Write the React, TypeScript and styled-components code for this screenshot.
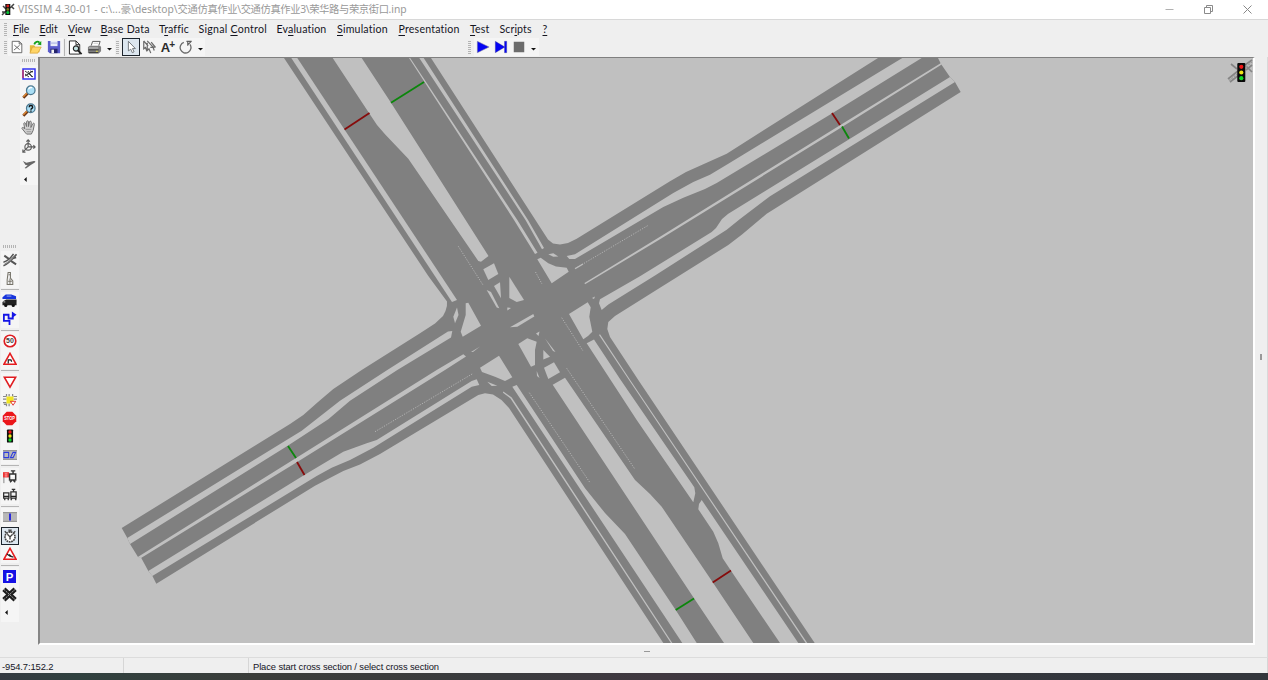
import React from "react";
import styled, { createGlobalStyle } from "styled-components";

const Global = createGlobalStyle`
  * { box-sizing: border-box; }
  body { margin: 0; overflow: hidden; background: #f0f0f0; }
`;

const UI = `"Lato", "Noto Sans CJK SC", sans-serif`;

const Window = styled.div`
  width: 1268px;
  height: 680px;
  display: flex;
  flex-direction: column;
  background: #efefef;
  color: #15151f;
  font-family: ${UI};
  svg { display: block; flex: none; }
`;

const TitleBar = styled.header`
  height: 20px;
  display: flex;
  align-items: center;
  background: #fff;
  border-bottom: 1px solid #d8d8d8;
  padding-left: 1px;
`;
const Title = styled.div`
  margin-left: 3px;
  font: 10.3px/19px "Noto Sans", "Noto Sans CJK SC", sans-serif;
  color: #999;
  white-space: pre;
  width: 1146px;
`;
const TitlePart = styled.span<{ $spacing: number }>`
  letter-spacing: ${(p) => p.$spacing}px;
`;
const Controls = styled.div`
  display: flex;
  gap: 28px;
`;

const MenuBar = styled.nav`
  height: 18px;
  display: flex;
  align-items: center;
  padding-left: 4px;
`;
const MenuItem = styled.div<{ $w: number; $ls: number }>`
  width: ${(p) => p.$w}px;
  font-size: 10.6px;
  line-height: 18px;
  letter-spacing: ${(p) => p.$ls}px;
  white-space: nowrap;
  flex: none;
  u { text-underline-offset: 1.5px; text-decoration-thickness: 1px; }
`;

const Grip = styled.div<{ $flat?: boolean; $gap?: number }>`
  flex: none;
  width: ${(p) => (p.$flat ? 13 : 3)}px;
  height: ${(p) => (p.$flat ? 3 : 13)}px;
  margin: ${(p) => (p.$flat ? "1px 0 3px" : `0 ${p.$gap ?? 3}px 0 0`)};
  background: ${(p) =>
    `repeating-linear-gradient(${p.$flat ? "90deg" : "180deg"}, #b4b4b4 0 1px, #efefef 1px 2px)`};
`;

const ToolBar = styled.div`
  height: 19px;
  display: flex;
  align-items: center;
  padding: 0 0 1px 4px;
`;
const ToolGroup = styled.div<{ $w: number }>`
  width: ${(p) => p.$w}px;
  height: 18px;
  display: flex;
  align-items: center;
  flex: none;
`;
const ToolButton = styled.div<{ $active?: boolean; $w?: number; $h?: number }>`
  width: ${(p) => p.$w ?? 18.4}px;
  height: ${(p) => p.$h ?? 18.25}px;
  flex: none;
  display: flex;
  align-items: center;
  justify-content: center;
  background: ${(p) => (p.$active ? "#dce6ef" : "#f5f5f5")};
  border: ${(p) => (p.$active ? "1px solid #1c242c" : "0")};
`;
const Divider = styled.div<{ $vertical?: boolean }>`
  flex: none;
  width: ${(p) => (p.$vertical ? 1 : 18)}px;
  height: ${(p) => (p.$vertical ? 17 : 1)}px;
  margin: ${(p) => (p.$vertical ? "0 2px 0 1px" : "1.5px 0")};
  background: #b5b5b5;
`;

const Body = styled.main`
  flex: 1;
  min-height: 0;
  display: flex;
`;
const SideBar = styled.aside<{ $w: number; $top: number }>`
  width: ${(p) => p.$w}px;
  padding: ${(p) => p.$top}px 0 0 0.5px;
  display: flex;
  flex-direction: column;
  align-items: center;
  flex: none;
`;
const Center = styled.section`
  width: 1217px;
  display: flex;
  flex-direction: column;
  align-items: center;
`;
const Viewport = styled.div`
  width: 1217px;
  height: 588px;
  border: 2px solid #fff;
  border-top: 1px solid #808080;
  border-left-color: #858585;
  background: #c0c0c0;
`;
const Handle = styled.div<{ $vertical?: boolean }>`
  width: ${(p) => (p.$vertical ? 2 : 6)}px;
  height: ${(p) => (p.$vertical ? 6 : 1)}px;
  margin: ${(p) => (p.$vertical ? "297px 0 0 5px" : "6px 0 0")};
  background: #999;
`;
const RightEdge = styled.div`
  flex: 1;
  border-right: 1px solid #d9d9d9;
`;

const StatusBar = styled.footer`
  height: 16px;
  display: flex;
  border-top: 1px solid #dcdcdc;
  font: 9.4px/17px "Liberation Sans", sans-serif;
`;
const StatusCell = styled.div<{ $w?: number; $ls?: number }>`
  width: ${(p) => (p.$w ? p.$w + "px" : "auto")};
  flex: ${(p) => (p.$w ? "none" : 1)};
  padding-left: ${(p) => (p.$w ? 2 : 4)}px;
  letter-spacing: ${(p) => p.$ls ?? 0}px;
  border-right: 1px solid #d6d6d6;
  white-space: nowrap;
`;
const Desktop = styled.div`
  height: 7px;
  background: linear-gradient(90deg, #343a41, #30413f 6%, #3b3d3a 20%, #3a3b3e 40%, #403840 52%, #34373d 75%, #33363c);
`;

/* ---------- icons ---------- */

const I: React.FC<{ s?: number; children: React.ReactNode }> = ({ s = 14, children }) => (
  <svg width={s} height={s} viewBox="0 0 16 16" fill="none">{children}</svg>
);

const Signal: React.FC<{ x?: number }> = ({ x = 8 }) => (
  <g>
    <rect x={x - 3.5} y="0.5" width="7" height="15" rx="1" fill="#111" />
    <circle cx={x} cy="3.4" r="1.9" fill="#f01414" />
    <circle cx={x} cy="8" r="1.9" fill="#f2e516" />
    <circle cx={x} cy="12.6" r="1.9" fill="#0cd82a" />
  </g>
);

const AppIcon = () => (
  <svg width="14" height="13" viewBox="0 0 14 13">
    <path d="M1 12 5 8M2 3 5 6M9 5l4-4M10 3l3 3M1 9h3" stroke="#444" strokeWidth="1.5" />
    <rect x="4.3" y="1" width="5" height="11" fill="#111" />
    <circle cx="6.8" cy="3" r="1.4" fill="#d8201c" />
    <circle cx="6.8" cy="6.4" r="1.3" fill="#7b7a20" />
    <circle cx="6.8" cy="9.6" r="1.5" fill="#08c838" />
  </svg>
);
const NewIcon = () => (
  <I s={14}><path d="M2.500 1.500h8l3 3v10h-11z" fill="#fdfdfd" stroke="#5c5c5c" /><path d="M10.500 1.500v3h3M4.500 11.500 11 6M5 6l6 5" stroke="#5c5c5c" /></I>
);
const OpenIcon = () => (
  <I><path d="M1 6h5l1 2h5v6H1z" fill="#e5ba3c" /><path d="m1 15 3-7h10l-4 7z" fill="#ffd567" stroke="#cf9930" strokeWidth=".7" /><path d="M6 5c1-3 4-4 6-2" stroke="#15a01a" strokeWidth="2" /><path d="M9.500 5 14 1v5z" fill="#15a01a" /></I>
);
const SaveIcon = () => (
  <I s={14}><path d="M1 1h14v14H3l-2-2z" fill="#5a5ccc" /><path d="M4 1h8v6H4z" fill="#e8ecf8" /><path d="M4 10h8v5H4z" fill="#24246c" /><path d="M5 11h3v4H5z" fill="#f4f4f4" /><path d="M4 3.500h8" stroke="#9da5dd" /></I>
);
const PreviewIcon = () => (
  <I s={15}><path d="M1.500 1h7l4 4v10h-11z" fill="#fff" stroke="#222" /><path d="M8.500 1v4h4" stroke="#222" /><circle cx="8.500" cy="9" r="2.800" fill="#c5e4e4" stroke="#222" strokeWidth="1.200" /><path d="m10.500 11 4 4" stroke="#222" strokeWidth="2" /></I>
);
const PrintIcon = () => (
  <I s={15}><path d="M4.500 6 6 1.500h8L12.500 6" fill="#fff" stroke="#555" /><path d="M1 7.500 3 6h11l1 1.500V12l-2.500 2.500H2L1 13z" fill="#808080" /><path d="M2 8.500h10M7 3.500h5" stroke="#ccc" /><path d="M1.500 10.500h11M2 13.500h10" stroke="#333" /><path d="M9.500 12h2" stroke="#f0e440" /></I>
);
const PointerIcon = () => (
  <I s={14}><path d="M5 1.500v11l2.700-2 1.800 4 2-1-1.800-3.700h3.300z" fill="#fff" stroke="#666b70" /></I>
);
const MultiPointerIcon = () => (
  <I s={14}><path d="M2 1v9l2-1.500 1.500 4M2 1l5 6M6 3v9l2-2 2 5M6 1l7 7.500h-3.500M10.500 2.500 15 8h-2.500l1.500 4" stroke="#6a6a6a" strokeWidth="1.400" /></I>
);
const LabelWrap = styled.span`
  font: bold 13px/15px "Liberation Sans", sans-serif;
  color: #2c2c2c;
  letter-spacing: -0.8px;
  padding-top: 1px;
  sup { font-size: 10px; line-height: 0; vertical-align: 4px; }
`;
const RotateIcon = () => (
  <I><path d="M5.500 2.800A6.200 6.200 0 1 0 12.500 5" stroke="#6b6b6b" strokeWidth="1.500" /><path d="M8.500 1.500h6M10 1.500v5M10 5.500l4-4" stroke="#5e5e5e" strokeWidth="1.300" /></I>
);
const DropIcon = () => (
  <svg width="5" height="8" viewBox="0 0 5 8"><path d="M0 5h5L2.500 7.500z" fill="#111" /></svg>
);
const LeftIcon = () => (
  <svg width="12" height="5" viewBox="0 0 12 5"><path d="M3.700 0v5L1 2.500z" fill="#111" /></svg>
);
const PlayIcon = () => (
  <I s={14}><path d="M1.500 1.500v13L15 8z" fill="#0404f4" stroke="#889" strokeWidth=".6" /></I>
);
const StepIcon = () => (
  <I s={14}><path d="M1.500 1.500v13L12.500 8zM12 1.500h2.500v13H12z" fill="#0404f4" stroke="#448" strokeWidth=".4" /></I>
);
const StopIcon = () => (
  <I s={12}><path d="M1 1h14v14H1z" fill="#6c6c6c" /></I>
);

const OverviewIcon = () => (
  <svg width="14" height="12" viewBox="0 0 14 12"><path d="M1 1h12v10H1z" fill="#fff" stroke="#3535f0" strokeWidth="1.500" /><path d="M1 2v8" stroke="#e22" /><path d="m3 3 8 6M3 8l8-5M6 3l4 6M3 6l4 3M8 3l3 1" stroke="#222" strokeWidth=".9" /></svg>
);
const Lens = ({ q }: { q?: boolean }) => (
  <I>
    <path d="m1.500 14.500 5-5" stroke="#6a3515" strokeWidth="3.200" />
    <path d="m1.500 13.500 4.500-4.500" stroke="#e08830" strokeWidth="1.600" />
    <circle cx="10" cy="6" r="4.900" fill="#a9def5" stroke="#4c7890" strokeWidth="1.400" />
    {q ? (
      <path d="M8.200 4.800c0-2.500 4-2.500 4 0 0 1.400-2 1.300-2 3m0 .7V10" stroke="#111" strokeWidth="1.600" />
    ) : (
      <path d="M7.500 5c.500-1.800 2-2.500 4-2" stroke="#fff" strokeWidth="1.500" />
    )}
  </I>
);
const HandIcon = () => (
  <I s={15}><path d="M5 14 1 9c0-1.500 1.500-1.500 3 .5L3 4c0-1.500 1.500-1.500 2 0L6 7V2c0-1.500 2-1.500 2 0v5l1-5c.3-1.300 2-1 2 .5L10.500 8 12.500 4c1-1.200 2-.5 1.700.8L13 11l-2 4H6z" fill="#d0d0d0" stroke="#6c6c6c" /><path d="M5 10h6M6 12.500h5" stroke="#999" /></I>
);
const AxesIcon = () => (
  <I s={14}><path d="M7 9V1M5 3l2-2 2 2M7 9h8M13 7l2 2-2 2M7 9l-6 6M1 12v3h3" stroke="#5c5c5c" strokeWidth="1.300" /><circle cx="7" cy="9" r="3.700" stroke="#5c5c5c" strokeWidth="1.300" /></I>
);
const PlaneIcon = () => (
  <I s={14}><path d="m1 4.500 4 2.200 8.500-2.200c2.500-.2 2 1.300.7 2L10 9l-5.500 4L3 12.500 6.500 9.500 4 9z" fill="#686868" /></I>
);

const LinksIcon = () => (
  <I><path d="M.5 14.500C5 13 10 8 15.500 1.500M.5 10.500C5 9.500 9 5.500 12 1" stroke="#555" strokeWidth="1.700" /><path d="m1.500 3 5.500 4M9 9l6 4M11 6l4-1" stroke="#555" strokeWidth="2.200" /><path d="M2 12.500C6 11 10 7 13.500 2.500" stroke="#888" strokeWidth="1.200" /></I>
);
const PavementIcon = () => (
  <I s={15}><path d="M6.500 1.500h2.500v6l2.500 3v4H5.500v-5z" fill="#eee" stroke="#77746a" strokeWidth="1.100" /><path d="M8.500 8v6M6.500 11h4M7 4h2" stroke="#77746a" /></I>
);
const VehiclesIcon = () => (
  <I s={15}><path d="M.5 4.500 4 1.500h6l5 2v3H.5z" fill="#1734dc" /><path d="M5 3.300h5" stroke="#9ae" /><path d="M4.500 7H15.500v6H.5V9.500l2-1.500z" fill="#222" /><circle cx="4" cy="13.300" r="1.700" fill="#111" /><circle cx="12" cy="13.300" r="1.700" fill="#111" /><path d="M1.500 9.500h2" stroke="#ccc" /></I>
);
const RouteIcon = () => (
  <I s={15}><path d="M8 15v-4.500H2V4h5v4h4.500V4" stroke="#1414e6" strokeWidth="1.900" /><path d="M10.500.5 15.500 4l-5 3.500z" fill="#1414e6" /></I>
);
const Speed = () => (
  <I><circle cx="8" cy="8" r="6.600" fill="#fff" stroke="#dd1d22" strokeWidth="1.900" /><text x="8" y="10.800" textAnchor="middle" fontSize="8" fontWeight="bold" fontFamily="Liberation Sans, sans-serif" fill="#444">50</text></I>
);
const WarnIcon = ({ d }: { d: string }) => (
  <I><path d="M8 1.500 15 14H1z" fill="#fff" stroke="#e51d20" strokeWidth="1.800" /><path d={d} stroke="#222" strokeWidth="1.400" /></I>
);
const YieldIcon = () => (
  <I><path d="M1.500 2.500h13L8 14z" fill="#fff" stroke="#e01c20" strokeWidth="1.800" /></I>
);
const ConflictIcon = () => (
  <I><path d="M0 4h4M0 7h4M0 11h4M4 1v3M7 1v3M11 1v3M12 4h4M12 7h4M4 12v3M7 12v3M1 13h3" stroke="#888" strokeWidth="1.400" /><path d="M4 4h8v8H4z" fill="#f1e522" /><path d="M8.500 9.500h6l-3 4.500z" fill="#fff" stroke="#e02020" /></I>
);
const StopSign = () => (
  <I s={15}><path d="M5 .8h6L15.200 5v6L11 15.200H5L.8 11V5z" fill="#eb171b" /><text x="2.300" y="10" fontSize="5.500" fontWeight="bold" fontFamily="Liberation Sans, sans-serif" fill="#fff" textLength="11.400" lengthAdjust="spacingAndGlyphs">STOP</text></I>
);
const DetectorIcon = () => (
  <I><path d="M0 2.500h16v11H0z" fill="#bbb" /><path d="M1 5h5.500v6H1zM8.500 11l3-6h3l-3 6z" stroke="#2c3bdf" strokeWidth="1.200" /><path d="M0 3h16M0 13h16" stroke="#888" /></I>
);
const TramStopIcon = () => (
  <I><path d="M1 3v12" stroke="#777" /><path d="M0 2.500h7v6H0z" fill="#e33" /><path d="M2 4.500h3M2 6.800h3" stroke="#fcc" /><path d="M9 1h5M11.500 1v3M7.500 4.500h7v7h-7zM8 14l2-2M14 14l-2-2" stroke="#333" strokeWidth="1.700" /><path d="M9 6h4v2H9z" fill="#fff" /></I>
);
const TransitIcon = () => (
  <I><path d="M.7 5.500h6v6h-6zM9 4.500h6v7H9zM10 1.500h4M12 2v2M2 12v2M6 12v2M10 12l-1 2M14 12l1 2" stroke="#333" strokeWidth="1.500" /><path d="M1 9.500h6M9 9.500h6" stroke="#222" strokeWidth="1.500" /></I>
);
const DataPointIcon = () => (
  <I><path d="M0 2.500h16v11H0z" fill="#b8b8b8" /><path d="M0 3h16M0 13h16" stroke="#888" /><path d="M8 4v8" stroke="#1919e0" strokeWidth="2" /></I>
);
const WatchIcon = () => (
  <I><circle cx="8" cy="9" r="5.700" fill="#fff" stroke="#444" strokeWidth="1.900" strokeDasharray="2 .7" /><path d="M6 1.300h4M8 2v2M2 2.500l2 2M14 2.500l-2 2M8 9l3-3M8 9 5 6M8 9v3" stroke="#444" strokeWidth="1.600" /></I>
);
const ParkIcon = () => (
  <I s={13}><path d="M0 0h16v16H0z" fill="#1512e5" /><text x="8" y="13" textAnchor="middle" fontSize="14" fontWeight="bold" fontFamily="Liberation Sans, sans-serif" fill="#fff">P</text></I>
);
const NodeIcon = () => (
  <I s={15}><path d="M2 2.500 14 13.500M2 13.500 14 2.500" stroke="#1c1c1c" strokeWidth="5" /><path d="M2 2.500 14 13.500M2 13.500 14 2.500" stroke="#bbb" strokeWidth=".9" strokeDasharray="2 1" /></I>
);

/* ---------- road network ---------- */

const network =
  "284,58 428.300,276 447,301.500 446.900,306 445.500,311 443,316 435,323.500 420,333.300 361.700,370 333.300,389 318,402 303.300,415 290,424 121.700,528 127.300,538 130,544 138,557 141,557.500 148.300,571 152.300,575.700 156.300,583.700 315,485.700 343.300,471 360,464.500 380,454 478.300,395 485,393.300 493,394.500 501.500,400 509,408 663.300,643 814.700,643 638.300,380 610,337 607.300,329 608.300,322 615,316 660,287.800 678,276.500 728.300,245 742,234.500 766.700,213.700 960.700,92 955,82 950,77 941,64 938,58 878,58 726.700,153.700 703.300,164.300 686,172 670,181.300 576.700,238.700 568,243 560,244.500 553,243.500 548,239.500 431,58";

const gaps = [
  "291.300,58 297.300,58 457,300 452,302",
  "332.700,58 361.700,58 391,102.700 488.500,256 481,261.700 478.300,261 408.300,158.700 385,134.300 377,125 369,113",
  "483.300,269.300 494,263.300 498.300,274 488.300,280",
  "494,286 500,282.300 501,298.300",
  "509.300,276.700 524,300 516.700,302 509.300,298",
  "486.700,290 491,292 499.300,308.300 496.700,307.500",
  "507.300,307.500 511,308 507.300,310.500",
  "510,327.300 533.300,314 534.300,316.500 517.300,326.700",
  "409,58 410.200,58 517.300,220 537.500,252.700 535,254 514,220",
  "419.300,58 423.700,58 528,220 544,248 542,249.300 525.500,220",
  "548.300,254.300 553.300,253.300 558.300,256.500 553.300,256.700",
  "537.300,259.300 540.700,257.700 548.300,263.300 556,266.500 566.700,267.700 568.700,271.700 551.700,283.300",
  "566.700,256 575,254.300 673.300,193 693.300,182 710,174.700 728.300,163.700 902.300,58 921.700,58 832.700,113 716.700,183 705,189 683.300,197.700 663.300,207 575,259 569.300,259",
  "941,63 941.700,64.500 842,127 660,239.300 585,284.300 584.500,283 660,236.700 840,125.300",
  "950,77 850,138.700 728.300,213.700 722,219 716,228 711.700,232 640,276.300 600,299.300 599,303.300 601.700,310 608.300,304.500 655,275.500 726.700,229.700 740,219 770,196.300 955,82",
  "592,298 595,296.500 594,299",
  "569,314 587.700,302.300 590.700,307.300 589.300,316.700 592.300,331.700 588,336 583.300,339.300",
  "586.700,343.300 594,339.500 620.700,380 694.300,487.300 695.300,493.300 693.300,502.300 636.700,420",
  "701.700,500 699,504 698.300,509.300 713.300,531.700 718.300,543.300 722.700,558.300 731,570.700 780,643 798.300,643",
  "599,335 600,334.200 630.200,380 807.300,643 805.700,643 629,380",
  "552.700,384.700 565,377.700 635,480 650,494 661.700,506.700 712.700,582.300 753.300,643 724,643 694,598.300",
  "544,367.700 554,362.300 560,372.300 548.300,379",
  "543.300,350 550,356.700 543.300,359.500",
  "545,338.500 547,341 555.500,352 553,351",
  "536,333.500 539.500,331.500 538.500,336",
  "518.300,344 527.300,338.300 536.700,341.700 535,350 535,365 531,366.700",
  "536.700,371 539.500,378 537,376",
  "512.300,386.700 516.700,385 585,488.300 605,513 625,534 675.700,610 696.700,643 682.300,643",
  "503.300,391.500 511.700,397.500 672.300,643 670.900,643 510.500,398.500 503,392.700",
  "480,367.700 499,355.700 512.300,377.300 505,381 495,376.700 482,372",
  "487.300,381.700 497.300,385.700 491.700,386",
  "465.700,303.300 468.300,302.700 481,325.700 462.700,336.700 460.700,331.700 465.700,315",
  "457,307.500 458.500,315 455,323.300 453.300,316.700",
  "452.300,331 448,331.500 387.300,370 340,400.700 301.700,430.700 127.300,538 130,544 287.700,445.700 328.300,419.300 350,400.700 397.300,370 451,337.500",
  "463.300,354.300 436.700,370 295.700,458.300 137.800,557 141,558 298,461.500 445,370 466,356.500",
  "471,352 480,346.500 473,352",
  "476.700,379.300 471.700,381 376.700,440 366.700,443.300 343.300,451.700 304.300,475 148.300,571 152.300,576 316.700,476 331.700,467.700 350,460 373.300,447.700 471.700,386.700 479.300,385",
];

const dotted: [number, number, number, number][] = [
  [458.3, 246.3, 483, 285],
  [535.5, 272, 542, 284],
  [575, 268.7, 648.3, 225.3],
  [529.3, 392.700, 590, 482.700],
  [566.700, 368.300, 635, 469.300],
  [561.700, 317.700, 583, 351],
  [375, 431.700, 473.300, 373.300],
];

const sections: [number, number, number, number, string][] = [
  [344.500, 129.500, 369.500, 113, "#860b0b"],
  [391, 102.700, 424, 82, "#0b860b"],
  [832, 113, 840, 125, "#860b0b"],
  [842, 126.500, 849, 138.500, "#0b860b"],
  [288, 446, 296, 458, "#0b860b"],
  [297, 462, 304.500, 475, "#860b0b"],
  [712.700, 582.500, 731, 570.500, "#860b0b"],
  [675.700, 610, 694, 598.500, "#0b860b"],
];

const Network = () => (
  <svg width="1213" height="585" viewBox="40 58 1213 585">
    <polygon points={network} fill="#808080" />
    {gaps.map((p, i) => <polygon key={i} points={p} fill="#c0c0c0" />)}
    <path d="M575 268.700 583 264" stroke="#c0c0c0" strokeWidth="1.300" />
    {dotted.map(([x1, y1, x2, y2], i) => (
      <line key={i} x1={x1} y1={y1} x2={x2} y2={y2} stroke="#b8b8b8" strokeWidth=".9" strokeDasharray="1.200 1.400" />
    ))}
    {sections.map(([x1, y1, x2, y2, c], i) => (
      <line key={i} x1={x1} y1={y1} x2={x2} y2={y2} stroke={c} strokeWidth="1.800" />
    ))}
    <g stroke="#858585" fill="none">
      <path d="m1231 64 6 5M1228 79l10-8M1230 82l9-7M1245 65l7-5M1246 70l6-5M1246 66l6 6" strokeWidth="1.700" />
      <path d="m1229 80.500 9-7M1246 67l6-5" stroke="#999" strokeWidth="1.200" strokeDasharray="2 1" />
    </g>
    <rect x="1237.300" y="63" width="8" height="19" rx="1" fill="#080808" />
    <circle cx="1241.300" cy="66.800" r="2.100" fill="#f01616" />
    <circle cx="1241.300" cy="72.500" r="2.100" fill="#f0e416" />
    <circle cx="1241.300" cy="78.200" r="2.100" fill="#12dd26" />
  </svg>
);

/* before, accelerator letter, after, slot width, letter spacing */
const menu: [string, string, string, number, number][] = [
  ["", "F", "ile", 26.500, -0.1],
  ["", "E", "dit", 28.500, 0],
  ["", "V", "iew", 32.500, -0.1],
  ["", "B", "ase Data", 58.500, 0.25],
  ["T", "r", "affic", 39.500, 0.1],
  ["Signal ", "C", "ontrol", 78, 0.25],
  ["Ev", "a", "luation", 60.500, 0.15],
  ["", "S", "imulation", 61.500, 0.2],
  ["", "P", "resentation", 71.500, 0.2],
  ["", "T", "est", 29.500, 0.1],
  ["Scr", "i", "pts", 43, 0.1],
  ["", "?", "", 20, 0],
];

const sideTools: React.ReactNode[][] = [
  [<LinksIcon />, <PavementIcon />],
  [<VehiclesIcon />, <RouteIcon />],
  [<Speed />, <WarnIcon d="M6 13V9h3l1 2" />],
  [<YieldIcon />, <ConflictIcon />, <StopSign />, <I s={14}><Signal /></I>, <DetectorIcon />],
  [<TramStopIcon />, <TransitIcon />],
  [<DataPointIcon />, <WatchIcon />, <WarnIcon d="m4.500 8 3.500 2.500 4 1M7 8.500l3 2.500" />],
  [<ParkIcon />, <NodeIcon />, <LeftIcon />],
];

export default function App() {
  return (
    <Window>
      <Global />
      <TitleBar>
        <AppIcon />
        <Title>
          <TitlePart $spacing={0.1}>VISSIM 4.30-01 - c:\...</TitlePart>
          <TitlePart $spacing={0}>豪\desktop\</TitlePart>
          <TitlePart $spacing={-0.37}>交通仿真作业\交通仿真作业3\荣华路与荣京街口</TitlePart>
          <TitlePart $spacing={0}>.inp</TitlePart>
        </Title>
        <Controls>
          <svg width="11" height="11" viewBox="0 0 11 11"><path d="M1.500 5.500h8" stroke="#b0b0b0" /></svg>
          <svg width="11" height="11" viewBox="0 0 11 11"><path d="M1.500 3.500h6v6h-6zM3.500 3V1.500h6v6H8" fill="none" stroke="#8a8a8a" /></svg>
          <svg width="11" height="11" viewBox="0 0 11 11"><path d="m1.500 1.500 8 8m0-8-8 8" stroke="#888" /></svg>
        </Controls>
      </TitleBar>
      <MenuBar>
        <Grip $gap={6} />
        {menu.map(([a, k, b, w, ls], i) => (
          <MenuItem key={i} $w={w} $ls={ls}>{a}<u>{k}</u>{b}</MenuItem>
        ))}
      </MenuBar>
      <ToolBar>
        <ToolGroup $w={112}>
          <Grip $gap={1} />
          <ToolButton><NewIcon /></ToolButton>
          <ToolButton><OpenIcon /></ToolButton>
          <ToolButton $w={18}><SaveIcon /></ToolButton>
          <Divider $vertical />
          <ToolButton><PreviewIcon /></ToolButton>
          <ToolButton><PrintIcon /></ToolButton>
          <ToolButton $w={11}><DropIcon /></ToolButton>
        </ToolGroup>
        <ToolGroup $w={351.500}>
          <Grip $gap={2.500} />
          <ToolButton $active><PointerIcon /></ToolButton>
          <ToolButton><MultiPointerIcon /></ToolButton>
          <ToolButton><LabelWrap>A<sup>+</sup></LabelWrap></ToolButton>
          <ToolButton><RotateIcon /></ToolButton>
          <ToolButton $w={10}><DropIcon /></ToolButton>
        </ToolGroup>
        <ToolGroup $w={80}>
          <Grip $gap={3} />
          <ToolButton><PlayIcon /></ToolButton>
          <ToolButton><StepIcon /></ToolButton>
          <ToolButton><StopIcon /></ToolButton>
          <ToolButton $w={10}><DropIcon /></ToolButton>
        </ToolGroup>
      </ToolBar>
      <Body>
        <SideBar $w={19} $top={187}>
          <Grip $flat />
          {sideTools.map((group, g) => (
            <React.Fragment key={g}>
              {g > 0 && <Divider />}
              {group.map((icon, i) => (
                <ToolButton key={i} $w={18} $active={g === 5 && i === 1}>{icon}</ToolButton>
              ))}
            </React.Fragment>
          ))}
        </SideBar>
        <SideBar $w={19} $top={0.5}>
          <Grip $flat />
          {[<OverviewIcon />, <Lens />, <Lens q />, <HandIcon />, <AxesIcon />, <PlaneIcon />].map((icon, i) => (
            <ToolButton key={i} $w={18} $h={18.1}>{icon}</ToolButton>
          ))}
          <ToolButton $w={18} $h={12}><LeftIcon /></ToolButton>
        </SideBar>
        <Center>
          <Viewport><Network /></Viewport>
          <Handle />
        </Center>
        <RightEdge><Handle $vertical /></RightEdge>
      </Body>
      <StatusBar>
        <StatusCell $w={124} $ls={-0.1}>-954.7:152.2</StatusCell>
        <StatusCell $w={125} />
        <StatusCell $ls={-0.11}>Place start cross section / select cross section</StatusCell>
      </StatusBar>
      <Desktop />
    </Window>
  );
}
